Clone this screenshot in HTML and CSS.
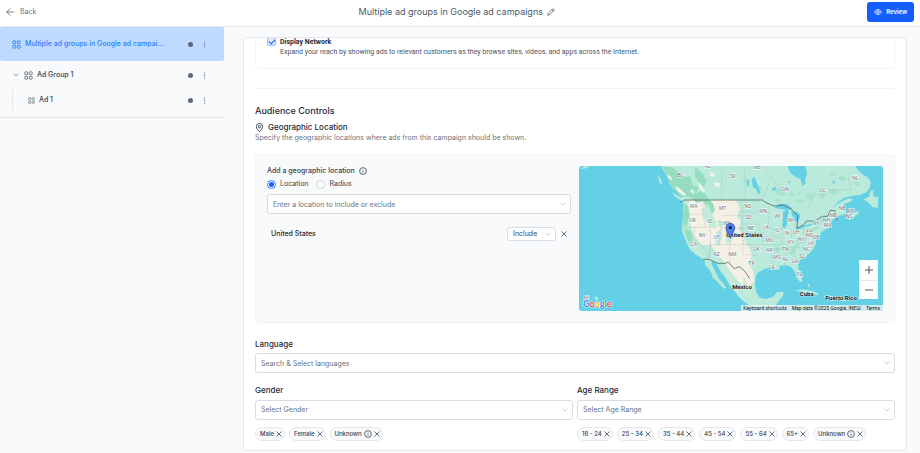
FILE: index.html
```html
<!DOCTYPE html>
<html lang="en">
<head>
    <meta charset="UTF-8">
    <meta name="viewport" content="width=device-width, initial-scale=1.0">
    <title>Multiple ad groups in Google ad campaigns</title>
    <link rel="stylesheet" href="styles.css">
</head>
<body>
    <!-- shared icons -->
    <svg hidden>
        <symbol id="icon-grid" viewBox="0 0 16 16">
            <g fill="none" stroke="currentColor" stroke-width="1.6">
                <rect x="1.5" y="1.5" width="5" height="5" rx="1"/>
                <rect x="9.5" y="1.5" width="5" height="5" rx="1"/>
                <rect x="1.5" y="9.5" width="5" height="5" rx="1"/>
                <rect x="9.5" y="9.5" width="5" height="5" rx="1"/>
            </g>
        </symbol>
        <symbol id="icon-dots" viewBox="0 0 16 16">
            <g fill="currentColor"><circle cx="8" cy="2.5" r="1.6"/><circle cx="8" cy="8" r="1.6"/><circle cx="8" cy="13.5" r="1.6"/></g>
        </symbol>
        <symbol id="icon-down" viewBox="0 0 16 16">
            <path d="M2 5l6 6 6-6" fill="none" stroke="currentColor" stroke-width="2" stroke-linecap="round"/>
        </symbol>
        <symbol id="icon-x" viewBox="0 0 16 16">
            <path d="M2 2l12 12M14 2L2 14" fill="none" stroke="currentColor" stroke-width="2" stroke-linecap="round"/>
        </symbol>
        <symbol id="icon-info" viewBox="0 0 16 16">
            <circle cx="8" cy="8" r="6.8" fill="none" stroke="currentColor" stroke-width="1.6"/>
            <path d="M8 7.2v4M8 4.4v1" fill="none" stroke="currentColor" stroke-width="1.6"/>
        </symbol>
    </svg>

    <header class="topbar">
        <a class="back" href="#">
            <svg class="icon icon--md" viewBox="0 0 16 16"><path d="M15 8H1.5M8 1.5L1.5 8 8 14.5" fill="none" stroke="currentColor" stroke-width="1.8" stroke-linecap="round" stroke-linejoin="round"/></svg>
            Back
        </a>
        <div class="title">
            <h1>Multiple ad groups in Google ad campaigns</h1>
            <button class="plain" type="button" aria-label="Edit name">
                <svg class="icon icon--md" viewBox="0 0 16 16"><path d="M1.5 14.5l1-4L11 2q1.500-1 2.700.3t.3 2.700L5.500 13.500zM9.500 3.500l3 3" fill="none" stroke="currentColor" stroke-width="1.500" stroke-linejoin="round"/></svg>
            </button>
        </div>
        <button class="review" type="button">
            <svg class="icon icon--md" viewBox="0 0 16 16"><path d="M1 8c3.500-6.500 10.500-6.500 14 0-3.500 6.500-10.500 6.500-14 0z" fill="none" stroke="currentColor" stroke-width="1.600"/><circle cx="8" cy="8" r="2.500" fill="none" stroke="currentColor" stroke-width="1.600"/></svg>
            Review
        </button>
    </header>

    <div class="layout">
        <nav class="sidebar" aria-label="Campaign">
            <div class="node node--campaign">
                <svg class="icon icon--lg"><use href="#icon-grid"/></svg>
                <a class="node__name" href="#">Multiple ad groups in Google ad campai...</a>
                <span class="dot"></span>
                <button class="plain" type="button" aria-label="Campaign menu"><svg class="icon icon--sm"><use href="#icon-dots"/></svg></button>
            </div>
            <div class="node node--group">
                <button class="plain toggle" type="button" aria-label="Collapse"><svg class="icon icon--xs"><use href="#icon-down"/></svg></button>
                <svg class="icon icon--lg"><use href="#icon-grid"/></svg>
                <a class="node__name" href="#">Ad Group 1</a>
                <span class="dot"></span>
                <button class="plain" type="button" aria-label="Ad group menu"><svg class="icon icon--sm"><use href="#icon-dots"/></svg></button>
            </div>
            <div class="node node--ad">
                <svg class="icon icon--sm"><use href="#icon-grid"/></svg>
                <a class="node__name" href="#">Ad 1</a>
                <span class="dot"></span>
                <button class="plain" type="button" aria-label="Ad menu"><svg class="icon icon--sm"><use href="#icon-dots"/></svg></button>
            </div>
        </nav>

        <main class="card">
            <div class="network">
                <input type="checkbox" id="display-network" checked>
                <div>
                    <label for="display-network">Display Network</label>
                    <p>Expand your reach by showing ads to relevant customers as they browse sites, videos, and apps across the Internet.</p>
                </div>
            </div>
            <hr>

            <h2>Audience Controls</h2>
            <h3 class="geo-title">
                <svg class="icon icon--lg" viewBox="0 0 16 16"><path d="M8 15.300C5 12.200 2.500 9.600 2.500 6.300a5.500 5.500 0 0 1 11 0c0 3.300-2.500 5.900-5.500 9z" fill="none" stroke="currentColor" stroke-width="1.500"/><circle cx="8" cy="6.500" r="2" fill="none" stroke="currentColor" stroke-width="1.500"/></svg>
                Geographic Location
            </h3>
            <p class="hint">Specify the geographic locations where ads from this campaign should be shown.</p>

            <section class="geo">
                <div class="geo__form">
                    <div class="geo__label">
                        <label for="location">Add a geographic location</label>
                        <svg class="icon icon--md"><use href="#icon-info"/></svg>
                    </div>
                    <div class="radios">
                        <label><input type="radio" name="mode" checked> Location</label>
                        <label><input type="radio" name="mode"> Radius</label>
                    </div>
                    <div class="field">
                        <input type="text" id="location" placeholder="Enter a location to include or exclude">
                        <svg class="icon icon--xs"><use href="#icon-down"/></svg>
                    </div>
                    <div class="place">
                        <span class="place__name">United States</span>
                        <div class="field field--small">
                            <select aria-label="United States"><option>Include</option><option>Exclude</option></select>
                            <svg class="icon icon--xs"><use href="#icon-down"/></svg>
                        </div>
                        <button class="plain" type="button" aria-label="Remove United States"><svg class="icon icon--xs"><use href="#icon-x"/></svg></button>
                    </div>
                </div>

                <div class="map">
                    <svg class="map__canvas" viewBox="12 18 912 435" preserveAspectRatio="xMidYMid slice">
                        <defs>
                            <clipPath id="land-clip"><use href="#land"/></clipPath>
                        </defs>
                        <rect width="960" height="480" fill="#63d0e6"/>
                        <path id="land" fill="#baeadb" d="M258 18l10 18 8 14 8 22 10 14 14 14 12 12 6 14-3 24 1 22-3 26 1 18 6 16 10 24 8 14 14 12 14 9 14 10 4 16 11 12 8 14 2 10 13 10 9 12 14 12 4-4-10-16-10-8-8-16-8-16-8-18 4-6 8 4 10 16 6 12 12 14 8 14 10 16 12 14 12 16 10 10 14 12 14 8H600l14-20 10-12 2-12-20 2-12 14-22 6-18-4-10-16-4-24 2-24 6-10 20-12 16-5 10 2 14 6 8-4-6-8 20-2 16 3 14 16 6 20 10 12 6-4-2-16-9-20-3-18 14-14 20-14 14-16 8-16-2-10 10-12 14-16 16-8 2-10 10-16 15-9 15-3 12-6-8-9-4-15 10-6 14-4 4-8-12-2-28 14-18 16 14-18 20-14 26-6 20-2 20-8 10-14 4-16-8-14-18-10-14-14-16-24H693l-1 18 4 18-6 18 2 12-10 6-6-20-14-6-14-10-8-16-4-20z"/>
                        <g clip-path="url(#land-clip)">
                            <path fill="#f5f0e6" d="M344 120h138l12 24-8 24 12 18-8 22 14 22 16 28 12 30-14 20 16 24 4 30-20 26-28-24-26-32-20-30-36-46-28-2-24-28-8-28-12-24 0-36 14-26z"/>
                            <path fill="#95ddbd" d="M262 18l30 4 36 28 18 0 6 24 18 8-6 18 22-8 14 24 14 14 6 22-12 12-14-18-8-22-20 4-24-18-34 0-18-32-14-12-8-34zM362 22l22 20 10 22-8 20-18-20-10-22zM326 130l14 8 4 30-8 30-12-2zM328 206l20 6 6 22-8 20-12-22z"/>
                            <path fill="#c1ebdb" d="M380 150l18-18 12 24 8 24 8 14-4 12-18-6-16-24zM342 248l18 8 22 34-20-6zM422 218l14-10 6 16-8 30-12 6zM450 212l18 0 8 20-10 22-12-8zM430 180l18 6-6 16-14-4zM436 300l14 20 18 26 20 36 20 38-24-8-22-42-18-30zM506 345l10 30 14 20-8 18-18-28z"/>
                            <path fill="#a6e2ce" d="M596 96l12-12 18 8 8 10-16 6zM640 104l10-8 12 8-8 6zM668 96l10 4-6 8zM762 44l16-8 6 8-16 6zM790 52l16-4 8 10-16 6zM836 62l16 4 4 8-14 4zM690 106l14-8 16 10-14 12zM728 102l18-6 10 8-16 12zM760 94l18-8 16 8-18 12zM660 122l14-6 16 8-18 6zM656 196l8-6 8 10-8 6zM708 208l14-8 10-18 22-18 8 6-24 22-18 22zM680 236l16-14 8 2-20 24zM664 250l12 0-18 18-12 0zM596 266l14-8 6 14-12 10zM640 276l16-10 4 14-12 6zM820 152l14-10 10 4-12 14zM598 120l12-6 10 8-14 6zM506 60l10-8 12 14-14 10zM550 76l12 8-8 14-10-10z"/>
                            <g fill="#63d0e6">
                                <path d="M598 143l16-12 22 2 18 14-24 2zM624 156l12-8 6 4-4 14-2 28-8 12-6-8 2-28zM648 154l20 2 8 12-8 22-14-14zM660 204l14-4 14-4 2 4-24 12zM688 198l22-8 2 4-22 8z"/>
                                <path d="M530 56l8-4 10 22 8 22-6 8-8-20-8 0zM515 60l6 2 2 18-6-4zM590 88l10-8 4 8-12 6zM772 60l10 8-8 4zM640 62l8 4-6 5z"/>
                            </g>
                            <g fill="#eef5ef"><path d="M300 78l10 4 22 20-4 6-18-12zM372 66l10 12 8 18-4 4-14-20zM350 88l8 6-2 8-10-8zM276 42l12 8 4 12-12-8zM406 36l12 4 0 10-12-2zM420 66l16 4-4 12-14-6z"/></g>
                        </g>
                        <!-- state and province lines -->
                        <path fill="none" stroke="#a9b5af" stroke-width="1.500" stroke-dasharray="5 3" d="M440 18v100M508 18l4 100M582 72l-20 46M618 88l-48-58M726 90l-30 60M732 88l98 2-10-40M326 162h58M384 118v48l8 38M326 202h80M358 202v36l42 38M406 202v68M406 184h32v34M438 166h64M438 204h68v50M406 254h116M434 218v38M404 276v20M406 254l-6 42M464 254v50M502 118v136M502 156h48M502 192h56M506 220h60M510 254h68M502 260v22l46 6M578 142l4 66M550 192l16 54M566 208h52M566 230h46l12 26M582 254h40M622 200v50M650 208v28M594 268h40l-6 48M594 268v48M630 262h92M658 264l2 46M684 270l12 38M660 244l24 6 18-28 20 10M686 206v24l38 2M750 180l4 22M764 164l4 30M700 252l30 8"/>
                        <!-- country borders -->
                        <path fill="none" stroke="#5d6e6b" stroke-width="2.500" d="M316 126l12-6h234l8 6 26 12 28-3 24 12 20 20-2 38 22-12 6-10h26l22-14h16l8-18 14 1 6 30M384 298l18 0 26 12h24l8-4 18 20 16-6 16 14 14 22"/>
                        <g fill="#baeadb">
                            <path d="M866 118l16-8 4-16 10-4-2 18 16 4-2 32-16-4-12-12zM248 46l6 22 8 8-4-18zM292 96l14 10 20 12-4 6-22-14zM818 170l20-12 12-6 2 6-20 18-10 4zM660 392l22-4 26 4 22 8-2 5-26-4-20-6zM744 408l18-2 20 8-6 8-24-6zM800 420l14-2 0 6-14 0zM700 370l6 10-3 3-6-11zM16 26l14-8 16 2-18 6zM38 412l5 3-2 4zM60 408l10 6-2 8-8-5z"/>
                        </g>
                        <g class="map__states">
                            <text x="317" y="50">BC</text><text x="398" y="24">AB</text><text x="474" y="53">SK</text><text x="546" y="27">MB</text><text x="631" y="92">ON</text><text x="742" y="95">QC</text><text x="841" y="59">NL</text>
                            <text x="356" y="145">WA</text><text x="443" y="149">MT</text><text x="352" y="186">OR</text><text x="404" y="189">ID</text><text x="456" y="195">WY</text><text x="382" y="230">NV</text><text x="425" y="237">UT</text><text x="357" y="257">CA</text><text x="425" y="287">AZ</text><text x="472" y="287">NM</text>
                            <text x="519" y="143">ND</text><text x="520" y="177">SD</text><text x="565" y="158">MN</text><text x="527" y="211">NE</text><text x="575" y="206">IA</text><text x="607" y="175">WI</text><text x="648" y="187">MI</text><text x="607" y="217">IL</text><text x="636" y="225">IN</text><text x="663" y="221">OH</text><text x="704" y="218">PA</text><text x="724" y="195">NY</text><text x="583" y="246">MO</text><text x="648" y="252">KY</text><text x="678" y="244">WV</text><text x="704" y="232">MD</text><text x="723" y="238">DE</text><text x="707" y="256">VA</text><text x="695" y="273">NC</text><text x="545" y="274">OK</text><text x="583" y="276">AR</text><text x="631" y="273">TN</text><text x="682" y="294">SC</text><text x="606" y="297">MS</text><text x="631" y="302">AL</text><text x="660" y="309">GA</text><text x="529" y="314">TX</text><text x="590" y="326">LA</text><text x="674" y="349">FL</text>
                            <text x="801" y="149">NB</text><text x="828" y="158">PE</text><text x="822" y="175">NS</text><text x="775" y="171">ME</text><text x="755" y="187">NH</text><text x="758" y="202">MA</text><text x="34" y="420">HI</text>
                        </g>
                        <g class="map__countries">
                            <text x="508" y="232">United States</text><text x="501" y="386">Mexico</text><text x="695" y="407">Cuba</text><text x="798" y="421">Puerto Rico</text>
                        </g>
                        <path fill="#4f80f0" stroke="#1c3f91" stroke-width="2" d="M466 235c-2-12-13-18-13-32a13 13 0 0 1 26 0c0 14-11 20-13 32z"/>
                        <circle cx="466" cy="203" r="5" fill="#14244d"/>
                    </svg>
                    <span class="map__logo"><b class="g-blue">G</b><b class="g-red">o</b><b class="g-yellow">o</b><b class="g-blue">g</b><b class="g-green">l</b><b class="g-red">e</b></span>
                    <div class="map__zoom">
                        <button type="button" aria-label="Zoom in"><svg class="icon icon--md" viewBox="0 0 16 16"><path d="M8 0v16M0 8h16" stroke="currentColor" stroke-width="2"/></svg></button>
                        <button type="button" aria-label="Zoom out"><svg class="icon icon--md" viewBox="0 0 16 16"><path d="M0 8h16" stroke="currentColor" stroke-width="2"/></svg></button>
                    </div>
                    <div class="map__legal">
                        <button type="button">Keyboard shortcuts</button>
                        <span>Map data ©2025 Google, INEGI</span>
                        <a href="#">Terms</a>
                    </div>
                </div>
            </section>

            <label class="heading" for="language">Language</label>
            <div class="field">
                <input type="text" id="language" placeholder="Search &amp; Select languages">
                <svg class="icon icon--xs"><use href="#icon-down"/></svg>
            </div>

            <div class="columns">
                <div>
                    <label class="heading" for="gender">Gender</label>
                    <div class="field">
                        <select id="gender"><option>Select Gender</option></select>
                        <svg class="icon icon--xs"><use href="#icon-down"/></svg>
                    </div>
                    <div class="chips">
                        <span class="chip">Male <button class="plain" type="button" aria-label="Remove Male"><svg class="icon icon--xs"><use href="#icon-x"/></svg></button></span>
                        <span class="chip">Female <button class="plain" type="button" aria-label="Remove Female"><svg class="icon icon--xs"><use href="#icon-x"/></svg></button></span>
                        <span class="chip">Unknown <svg class="icon icon--md"><use href="#icon-info"/></svg><button class="plain" type="button" aria-label="Remove Unknown"><svg class="icon icon--xs"><use href="#icon-x"/></svg></button></span>
                    </div>
                </div>
                <div>
                    <label class="heading" for="age">Age Range</label>
                    <div class="field">
                        <select id="age"><option>Select Age Range</option></select>
                        <svg class="icon icon--xs"><use href="#icon-down"/></svg>
                    </div>
                    <div class="chips">
                        <span class="chip">18 - 24 <button class="plain" type="button" aria-label="Remove 18 - 24"><svg class="icon icon--xs"><use href="#icon-x"/></svg></button></span>
                        <span class="chip">25 - 34 <button class="plain" type="button" aria-label="Remove 25 - 34"><svg class="icon icon--xs"><use href="#icon-x"/></svg></button></span>
                        <span class="chip">35 - 44 <button class="plain" type="button" aria-label="Remove 35 - 44"><svg class="icon icon--xs"><use href="#icon-x"/></svg></button></span>
                        <span class="chip">45 - 54 <button class="plain" type="button" aria-label="Remove 45 - 54"><svg class="icon icon--xs"><use href="#icon-x"/></svg></button></span>
                        <span class="chip">55 - 64 <button class="plain" type="button" aria-label="Remove 55 - 64"><svg class="icon icon--xs"><use href="#icon-x"/></svg></button></span>
                        <span class="chip">65+ <button class="plain" type="button" aria-label="Remove 65+"><svg class="icon icon--xs"><use href="#icon-x"/></svg></button></span>
                        <span class="chip">Unknown <svg class="icon icon--md"><use href="#icon-info"/></svg><button class="plain" type="button" aria-label="Remove Unknown"><svg class="icon icon--xs"><use href="#icon-x"/></svg></button></span>
                    </div>
                </div>
            </div>
        </main>
    </div>
</body>
</html>
```
FILE: styles.css
```css
* {
  box-sizing: border-box;
}

body {
  margin: 0;
  background: #f9fafb;
  color: #364153;
  font: 7px/10px Inter, "Liberation Sans", sans-serif;
}

h1, h2, h3, p {
  margin: 0;
}

a {
  color: inherit;
  text-decoration: none;
}

button, input, select {
  font: inherit;
  color: inherit;
}

svg[hidden] {
  display: none;
}

.icon {
  display: block;
  flex: none;
}

.icon--xs { width: 6px; height: 6px; }
.icon--sm { width: 7px; height: 7px; }
.icon--md { width: 8px; height: 8px; }
.icon--lg { width: 9px; height: 9px; }

.plain {
  display: flex;
  padding: 0;
  border: 0;
  background: none;
}

/* top bar */
.topbar {
  display: flex;
  align-items: center;
  justify-content: space-between;
  height: 27px;
  padding: 0 6px 3px;
  background: #fff;
  border-bottom: 1px solid #e5e7eb;
}

.back {
  display: flex;
  align-items: center;
  gap: 6px;
  color: #6a7282;
}

.title {
  display: flex;
  align-items: center;
  gap: 4px;
  padding-left: 10px;
  color: #4a5a66;
}

.title h1 {
  font-size: 9px;
  font-weight: 400;
}

.review {
  display: flex;
  align-items: center;
  gap: 4px;
  height: 20px;
  padding: 0 7px;
  border: 0;
  border-radius: 3px;
  background: #155dfc;
  color: #fff;
  font-size: 6px;
  font-weight: 600;
}

.layout {
  display: flex;
  align-items: flex-start;
}

/* sidebar tree */
.sidebar {
  width: 224px;
  flex: none;
  padding-bottom: 7px;
  border-bottom: 1px solid #e5e7eb;
}

.node {
  display: flex;
  align-items: center;
  height: 28px;
  padding-right: 16px;
  font-weight: 500;
  color: #364153;
}

.node .icon {
  color: #6a7282;
}

.node__name {
  flex: 1;
  margin-left: 4px;
}

.dot {
  width: 5px;
  height: 5px;
  margin-right: 8px;
  border-radius: 50%;
  background: #5b6780;
}

.node--campaign {
  height: 34px;
  padding-left: 12px;
  border-radius: 2px;
  background: #bedbff;
  color: #2b7fff;
}

.node--campaign > .icon {
  color: #2b7fff;
}

.node--group {
  padding-left: 13px;
}

.toggle {
  margin-right: 5px;
}

.node--ad {
  height: 20px;
  margin: 1px 0 0 12px;
  padding-left: 15px;
  border-left: 1px solid #e5e7eb;
}

/* settings card */
.card {
  flex: 1;
  min-width: 0;
  margin: 10px 13px 2px 19px;
  padding: 0 11px 9px;
  border: 1px solid #e5e7eb;
  border-radius: 4px;
  background: #fff;
  overflow: hidden;
}

.network {
  display: flex;
  gap: 4px;
  margin-top: -14px;
  padding: 12px 11px 11px;
  border: 1px solid #f3f4f6;
  border-radius: 4px;
  color: #4a5565;
  font-family: Roboto, "Liberation Sans", sans-serif;
}

.network label {
  color: #1e2939;
  font-weight: 700;
}

.network input {
  appearance: none;
  width: 9px;
  height: 9px;
  margin: 0;
  border: 1px solid #8ec5ff;
  border-radius: 2px;
  background: #dbeafe;
  position: relative;
}

.network input:checked::after {
  content: "";
  position: absolute;
  left: 2px;
  top: 0;
  width: 3px;
  height: 5px;
  border: solid #155dfc;
  border-width: 0 1px 1px 0;
  transform: rotate(45deg);
}

hr {
  margin: 19px 0 17px;
  border: 0;
  border-top: 1px solid #f3f4f6;
}

h2 {
  color: #1e2939;
  font-size: 9px;
  font-weight: 500;
  line-height: 10px;
}

.geo-title {
  display: flex;
  align-items: center;
  gap: 4px;
  margin-top: 6px;
  color: #1e2939;
  font-size: 8px;
  font-weight: 500;
}

.hint {
  margin-top: 1px;
  color: #6a7282;
}

.geo {
  display: flex;
  gap: 8px;
  margin-top: 11px;
  padding: 11px;
  border: 1px solid #f3f4f6;
  border-radius: 4px;
  background: #f9fafb;
}

.geo__form {
  flex: 1;
}

.geo__label {
  display: flex;
  align-items: center;
  gap: 4px;
  font-weight: 500;
}

.radios {
  display: flex;
  gap: 8px;
  margin: 3px 0 5px;
}

.radios label {
  display: flex;
  align-items: center;
  gap: 4px;
}

.radios input {
  appearance: none;
  width: 9px;
  height: 9px;
  margin: 0;
  border: 1px solid #d1d5dc;
  border-radius: 50%;
  background: #fff;
}

.radios input:checked {
  border-color: #2b7fff;
  background: radial-gradient(#155dfc 2px, #fff 3px);
}

.field {
  position: relative;
}

.field input,
.field select {
  display: block;
  appearance: none;
  width: 100%;
  height: 20px;
  padding: 0 5px;
  border: 1px solid #d8dce3;
  border-radius: 3px;
  background: #fff;
  color: #6a7282;
}

.field input::placeholder {
  color: #6a7282;
  opacity: 1;
}

.field .icon {
  position: absolute;
  right: 5px;
  top: 7px;
  color: #b4bac4;
  pointer-events: none;
}

.field--small {
  width: 49px;
}

.field--small select {
  height: 14px;
  color: #364153;
}

.field--small .icon {
  top: 4px;
}

.place {
  display: flex;
  align-items: center;
  gap: 5px;
  margin-top: 13px;
  padding: 0 4px;
}

.place__name {
  flex: 1;
  color: #1e2939;
  font-weight: 500;
}

/* map */
.map {
  position: relative;
  flex: 1;
  height: 145px;
  border-radius: 3px;
  overflow: hidden;
  font-family: Roboto, "Liberation Sans", sans-serif;
}

.map__canvas {
  display: block;
  width: 100%;
  height: 100%;
}

.map__states {
  fill: #5f6f78;
  stroke: #fff;
  stroke-width: 3px;
  paint-order: stroke;
  font-size: 15px;
  text-anchor: middle;
}

.map__countries {
  fill: #111;
  stroke: #fff;
  stroke-width: 2px;
  paint-order: stroke;
  font-size: 18px;
  font-weight: 700;
  text-anchor: middle;
}

.map__logo {
  position: absolute;
  left: 4px;
  bottom: 2px;
  font: 9px/11px Lato, sans-serif;
  text-shadow: 0 0 1px #fff, 0 0 1px #fff, 0 0 2px #fff;
}

.g-blue { color: #4285f4; }
.g-red { color: #ea4335; }
.g-yellow { color: #fbbc05; }
.g-green { color: #34a853; }

.map__zoom {
  position: absolute;
  right: 5px;
  bottom: 12px;
  width: 19px;
  background: #fff;
}

.map__zoom button {
  display: flex;
  align-items: center;
  justify-content: center;
  width: 100%;
  height: 20px;
  padding: 0;
  border: 0;
  background: none;
  color: #555;
}

.map__zoom button + button {
  height: 19px;
  border-top: 1px solid #e5e7eb;
}

.map__legal {
  position: absolute;
  right: 0;
  bottom: 0;
  display: flex;
  gap: 5px;
  padding: 0 3px 0 2px;
  background: rgba(245, 245, 245, 0.75);
  color: #111;
  font-size: 5px;
  line-height: 6px;
}

.map__legal button {
  padding: 0;
  border: 0;
  background: none;
}

/* audience fields */
.heading {
  display: block;
  margin: 16px 0 4px;
  color: #1e2939;
  font-size: 8px;
  font-weight: 500;
}

.columns {
  display: flex;
  gap: 4px;
}

.columns > div {
  flex: 1;
  min-width: 0;
}

.columns .heading {
  margin: 12px 0 5px;
}

.chips {
  display: flex;
  gap: 4px;
  margin-top: 7px;
}

.chip {
  display: flex;
  align-items: center;
  gap: 2px;
  height: 14px;
  padding: 0 2px 0 4px;
  border: 1px solid #e5e7eb;
  border-radius: 7px;
  background: #f9fafb;
  font-size: 6px;
  font-weight: 500;
  white-space: nowrap;
}
```
